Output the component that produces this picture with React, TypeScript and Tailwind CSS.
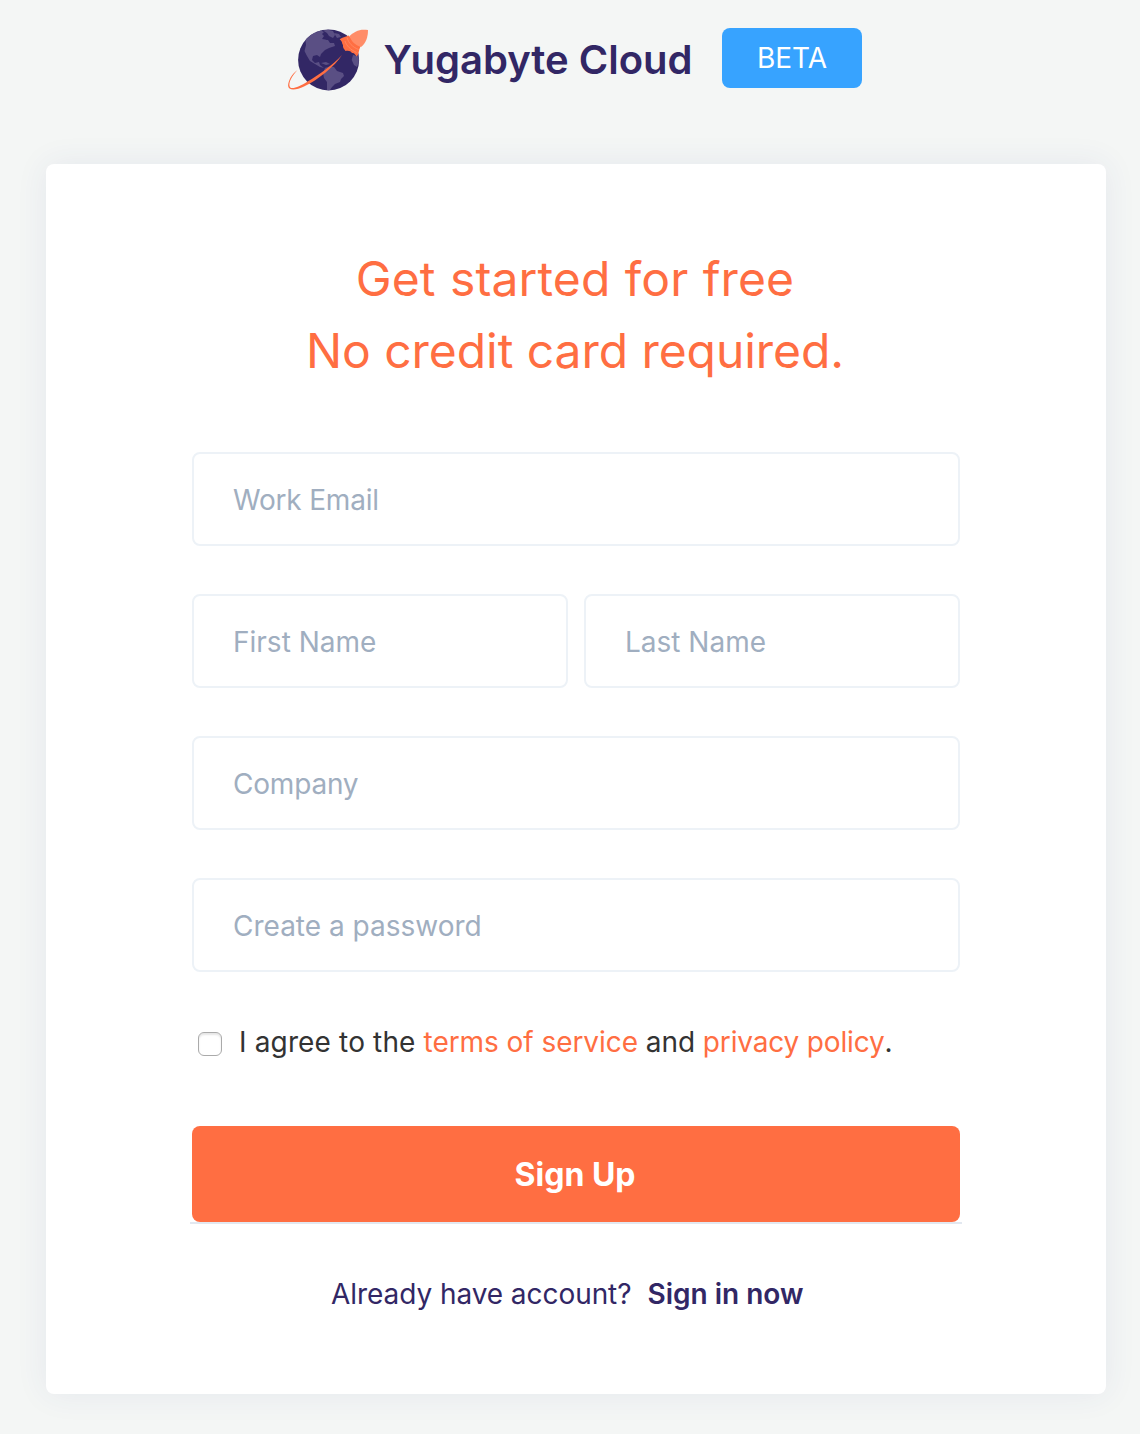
import React from "react";

function Field({ label, type = "text", tracking = "tracking-normal" }: { label: string; type?: string; tracking?: string }) {
  return (
    <input
      type={type}
      placeholder={label}
      className={`block h-[94px] w-full min-w-0 rounded-lg border-2 border-[#edf2f7] bg-white px-[39px] pb-0 pt-[2px] text-[28px] outline-none placeholder:text-[#a0aec0] ${tracking}`}
    />
  );
}

function Logo() {
  return (
    <svg width="84" height="66" viewBox="0 0 84 66" fill="none" className="shrink-0">
      <circle cx="42.6" cy="32.9" r="30.5" fill="#322765" />
      <g fill="#5a4f84">
        <path d="M19.500 13C23 9 26 7 29 5.500L35 6L38 9L36 12L42 13L44 16L48 16L49 19L43 21L39 23L35 27L34 30L31 28L27 29L26 33L29 36L33 35L34 38L38 41L34 40L29 37L24 34L21 29L18.500 24L20 18Z" />
        <path d="M30 5L35 3.500L38 5L35 8Z M37 3.500L42 2.700L47 4L49 8L47 11L43 9L41 6Z M48 6L53 7L55 10L51 11Z" />
        <path d="M40 9L43 12L41 13L38 11Z" fill="#322765" />
        <path d="M39 41L43 39.500L48 40L51 44L57 46L58 49L55 52L54 55L49 57L46 60L44 63L41 63L41 55L38 51L37 46Z M35 36L40 35L44 37L40 38Z" />
        <path d="M67 28L71.500 29L73 32L72.500 36L71 40L68 38L65.700 33Z" />
      </g>
      <path d="M11.500 43C5.500 47 2.300 54 2.100 58.500C2 64 10 63.500 18 59.500C32 53 49 39 56 28C46 38.500 33 48 21.500 54.500C13 60 5 63 3.700 59.500C2.300 55.500 6 49 11.500 43Z" fill="#ff6e42" />
      <path d="M62.500 8.500C59 10.500 57 9.500 53.700 12.500C57 15 55.500 16 57 18C56.500 20.500 58 22 59.500 24C63 23.500 64.500 24 66 26C69 26 69 28 71 29.500C73 26.500 72.500 23.500 74.500 19.500Z" fill="#ff6e42" />
      <path d="M82 3C76 2.500 73 3 70 4.500C67 6 65 7.500 63.500 9C65 14 69 18 75 20C80 16 82 10 82 3Z" fill="#ff8d68" />
      <path d="M61 10.500C62.500 16 66.500 20 72.500 22.500M59 14C60.500 19 64.500 22.500 70.500 25.500" stroke="#ff8d68" strokeWidth="0.8" />
    </svg>
  );
}

export default function App() {
  return (
    <div className="h-[1434px] w-[1140px] overflow-hidden bg-[#f4f6f5] font-['Inter',sans-serif]">
      <header className="flex h-[164px] items-start pl-[286px] pt-[27px]">
        <Logo />
        <h1 className="ml-[13.5px] mt-[3px] whitespace-nowrap text-[40px] font-semibold leading-[60px] text-[#322765]">Yugabyte Cloud</h1>
        <span className="ml-[29.5px] mt-px flex h-[60px] w-[140px] items-center justify-center rounded-lg bg-[#37a3ff] text-[28px] text-white">BETA</span>
      </header>
      <main className="ml-[46px] h-[1230px] w-[1060px] rounded-lg bg-white px-[146px] pt-[79px] shadow-[0_0_32px_rgba(50,60,140,0.08)]">
        <h2 className="text-center text-[48px] leading-[72px] text-[#ff6e42]">
          <span className="mr-[2px] tracking-[0.1px] [word-spacing:0.8px]">Get started for free</span>
          <br />
          <span className="mr-[2px] tracking-[-0.06px]">No credit card required.</span>
        </h2>
        <form className="mt-[65px]">
          <div className="flex flex-col gap-12">
            <Field label="Work Email" tracking="tracking-[-0.2px]" />
            <div className="grid grid-cols-2 gap-4">
              <Field label="First Name" />
              <Field label="Last Name" />
            </div>
            <Field label="Company" tracking="tracking-[-0.2px]" />
            <Field label="Create a password" type="password" />
          </div>
          <label className="mt-[48px] flex h-[44px] items-center pl-[6px] text-[28px] leading-[44px] text-[#333]">
            <input type="checkbox" className="mr-[17px] mt-[4px] size-[24px] shrink-0 appearance-none rounded-[6px] border border-[#aaa] bg-white shadow-[inset_0_2px_2px_rgba(0,0,0,0.1)]" />
            <span className="whitespace-nowrap tracking-[-0.06px]">
              <span className="tracking-[0.15px]">I agree to the </span>
              <a className="text-[#ff6e42]">terms of service</a> and <a className="tracking-[-0.16px] text-[#ff6e42]">privacy policy</a>.
            </span>
          </label>
          <div className="-mx-[2px] mt-[62px] border-b-2 border-[#e2e8f0] px-[2px]">
            <button type="button" className="block h-24 w-full rounded-lg bg-[#ff6e42] pr-[2px] pt-[2px] text-[32px] font-bold text-white">Sign Up</button>
          </div>
        </form>
        <p className="mt-[48px] flex gap-4 pl-[139px] text-[28px] leading-[44px] text-[#322765]">
          <span className="tracking-[-0.06px]">Already have account?</span>
          <a className="font-semibold">Sign in now</a>
        </p>
      </main>
    </div>
  );
}
